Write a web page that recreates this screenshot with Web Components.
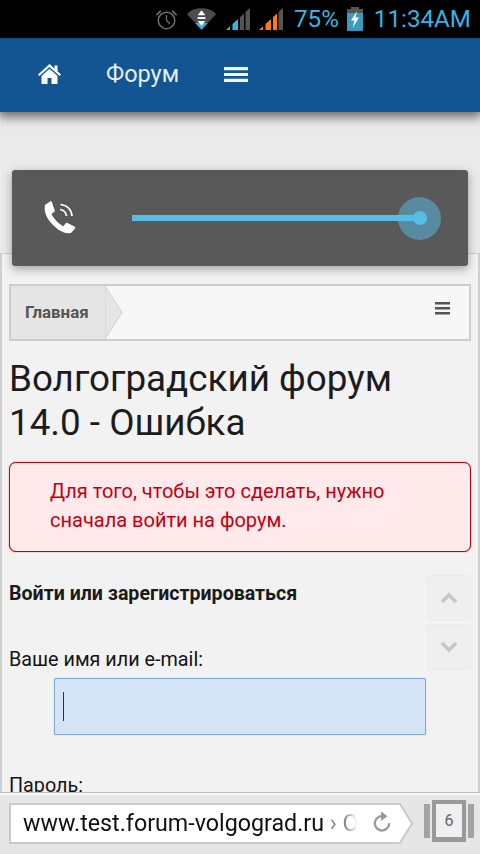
<!DOCTYPE html>
<html>
<head>
<meta charset="utf-8">
<title>Волгоградский форум</title>
<style>
  html, body { margin: 0; padding: 0; }
  body { width: 480px; height: 854px; overflow: hidden; display: flex; flex-direction: column; position: relative; font-family: Roboto, "Noto Sans", sans-serif; background: #ebebeb; }
</style>
</head>
<body>
<template id="status-bar-template">
  <style>
    :host { display: flex; flex: none; height: 38px; background: #000; align-items: center; justify-content: flex-end; color: #33b5e5; font: 24.2px/38px Roboto, sans-serif; box-sizing: border-box; padding: 0 9px 0 0; }
    svg { display: block; flex: none; }
    .pct { margin-left: 11px; }
    .time { margin-left: 11px; }
  </style>
  <svg width="25" height="24" viewBox="0 0 26 24">
    <circle cx="13" cy="13.500" r="8.600" fill="none" stroke="#6e6e6e" stroke-width="1.600"/>
    <path d="M13 8v5.500l3.500 3.500" fill="none" stroke="#6e6e6e" stroke-width="1.400"/>
    <path d="M2.500 8 7 3.500M23.500 8 19 3.500" stroke="#6e6e6e" stroke-width="1.800"/>
  </svg>
  <svg width="31" height="24" viewBox="0 0 32 24" style="margin-left:7px">
    <path d="M1 7C5 2.500 10 1 16 1s11 1.500 15 6L16 23Z" fill="#4c4c4c"/>
    <path d="M9.500 16h13L16 23Z" fill="#33b5e5"/>
    <path d="M16 3l4 5h-8ZM16 19l-4-5h8Z" fill="#fff"/>
    <rect x="12" y="10" width="8" height="2" fill="#fff"/>
  </svg>
  <svg width="24" height="22" viewBox="0 0 24 22" style="margin-left:9px">
    <path d="M0 22 4 18.300V22ZM6.500 22V16L12 11V22Z" fill="#33b5e5"/>
    <path d="M14 22V9.200L18 5.500V22ZM19.500 22V4L24 0V22Z" fill="#555"/>
  </svg>
  <svg width="24" height="22" viewBox="0 0 24 22" style="margin-left:9px">
    <path d="M0 22 4 18.300V22ZM6.500 22V16L12 11V22ZM14 22V9.200L18 5.500V22Z" fill="#ff7a12"/>
    <path d="M19.500 22V4L24 0V22Z" fill="#555"/>
  </svg>
  <span class="pct">75%</span>
  <svg width="16" height="24" viewBox="0 0 16 24" style="margin-left:8px">
    <path d="M4 0h8v2h4v22H0V2h4Z" fill="#555"/>
    <path d="M0 6h16v18H0Z" fill="#3a9bc0"/>
    <path d="M10 4 4 13.500h3.500L5.500 21 12 10.500H8.500Z" fill="#fff"/>
  </svg>
  <span class="time">11:34AM</span>
</template>

<template id="forum-nav-template">
  <style>
    :host { display: flex; flex: none; height: 74px; background: #125592; border-top: 1px solid #0f4d85; box-sizing: border-box; align-items: center; color: #e6edf4; box-shadow: 0 3px 10px 2px rgba(0,0,0,.55); position: relative; z-index: 1; font: 23.500px Roboto, "Open Sans", sans-serif; padding-bottom: 3px; }
    svg { display: block; flex: none; }
    .home { margin-left: 38px; }
    .title { margin-left: 45px; }
    .menu { margin-left: 45px; }
  </style>
  <svg class="home" width="23" height="20" viewBox="0 0 23 20">
    <path d="M11.500 0 0 10.500l1.400 1.500L11.500 3l10.100 9 1.400-1.500-3.500-3.200V1.500h-3v3Z" fill="#fff"/>
    <path d="M11.500 4.800 3.500 12v8h6v-6h4v6h6v-8Z" fill="#fff"/>
  </svg>
  <span class="title"><slot></slot></span>
  <svg class="menu" width="24" height="15" viewBox="0 0 24 15">
    <path d="M0 0h24v3.200H0ZM0 5.900h24v3.200H0ZM0 11.800h24v3.200H0Z" fill="#f2f5f8"/>
  </svg>
</template>

<template id="forum-content-template">
  <style>
    :host { display: block; flex: 1; min-height: 0; overflow: hidden; padding-top: 141px; box-sizing: border-box; background: repeating-linear-gradient(90deg,#ebebeb 0 3px,#e8e8e8 3px 4px); }
    .panel { background: #f2f2f2; border: 1px solid #cfcfcf; border-width: 1px 2px 0; padding: 30px 7px 0; height: 600px; box-sizing: border-box; color: #141414; }
  </style>
  <div class="panel"><slot></slot></div>
</template>

<template id="bread-crumb-template">
  <style>
    :host { display: flex; height: 57px; box-sizing: border-box; background: #f7f7f7; border: 2px solid #cdcdcd; align-items: stretch; justify-content: space-between; color: #555; }
    .crumb { position: relative; width: 94px; background: #e5e5e5; box-sizing: border-box; padding-left: 14px; font: bold 16.900px/53px Roboto, sans-serif; white-space: nowrap; }
    svg.tip { position: absolute; left: 94px; top: 0; }
    svg.menu { margin: 16px 19px 0 0; }
  </style>
  <div class="crumb"><slot></slot>
    <svg class="tip" width="18" height="53" viewBox="0 0 18 53"><path d="M0 0 17 26.500 0 53Z" fill="#e5e5e5" stroke="#cfcfcf" stroke-width="1"/></svg>
  </div>
  <svg class="menu" width="15" height="13" viewBox="0 0 15 13"><path d="M0 0h15v2.600H0ZM0 5h15v2.600H0ZM0 10h15v2.600H0Z" fill="#555"/></svg>
</template>

<template id="page-title-template">
  <style>
    :host { display: block; margin: 16px 30px 17px 0; font: 36.800px/44px Roboto, sans-serif; color: #1c1c1c; }
  </style>
  <slot></slot>
</template>

<template id="error-box-template">
  <style>
    :host { display: block; height: 90px; box-sizing: border-box; border: 1px solid #c4000e; border-radius: 7px; box-shadow: 0 0 1px #c4000e; background: #ffe9ea; color: #c00010; padding: 14px 20px 0 40px; font: 20px/29px Roboto, sans-serif; }
  </style>
  <slot></slot>
</template>

<template id="login-form-template">
  <style>
    :host { display: block; color: #141414; }
    h2 { margin: 31px 0 0; padding-bottom: 4px; border-bottom: 1px solid #f7f7f7; font: bold 19.600px/22px Roboto, sans-serif; color: #1a1a1a; }
    label { display: block; font: 19.800px/22px Roboto, sans-serif; }
    .name { margin-top: 39px; }
    .field { margin: 7px 0 0 45px; width: 372px; height: 57px; box-sizing: border-box; background: #d4e4f5; border: 1px solid #7fa9d8; border-radius: 2px; box-shadow: 0 0 1px #7fa9d8; display: flex; align-items: center; padding-left: 8px; }
    .caret { width: 1px; height: 29px; background: #333; }
    .pass { margin-top: 40px; }
  </style>
  <h2><slot name="title"></slot></h2>
  <label class="name"><slot name="name"></slot></label>
  <div class="field"><span class="caret"></span></div>
  <label class="pass"><slot name="pass"></slot></label>
</template>

<template id="volume-panel-template">
  <style>
    :host { display: flex; position: absolute; left: 12px; top: 170px; width: 456px; height: 96px; box-sizing: border-box; background: rgba(78,78,78,.93); border-radius: 3px; box-shadow: 0 3px 10px rgba(0,0,0,.35); align-items: center; z-index: 3; }
    svg { display: block; flex: none; margin-left: 32px; margin-top: -2px; }
    .track { position: relative; margin-left: 54px; width: 288px; height: 6px; background: #58bde6; }
    .halo { position: absolute; left: 266px; top: -18px; width: 43px; height: 43px; border-radius: 50%; background: rgba(88,189,230,.5); }
    .dot { position: absolute; left: 281px; top: -4px; width: 14px; height: 14px; border-radius: 50%; background: #58bde6; }
  </style>
  <svg width="34" height="34" viewBox="0 0 34 34">
    <path d="M6 1.500 1 5c-1.500 7 2 14 8 20 6 6 12 9 18 8l4-4.500c.6-.8.3-1.600-.5-2l-7-3.600c-.7-.3-1.300-.2-1.800.4l-2.400 3C15 24 10 19 7.400 14l2.900-2.300c.6-.5.7-1.200.3-1.800L7.800 2c-.4-.8-1.100-1-1.800-.5Z" fill="#fff"/>
    <path d="M16 9.500c3.500.5 6 3 6.500 6.500M16.500 4.500c6.500.5 11 5 11.500 11.500" fill="none" stroke="#fff" stroke-width="1.700"/>
  </svg>
  <div class="track"><span class="halo"></span><span class="dot"></span></div>
</template>

<template id="scroll-buttons-template">
  <style>
    :host { display: flex; flex-direction: column; gap: 3px; position: absolute; left: 427px; top: 575px; z-index: 2; }
    div { width: 44px; height: 46px; background: rgba(238,238,238,.9); border: 1px solid #ebebeb; border-radius: 3px; box-sizing: border-box; display: flex; align-items: center; justify-content: center; }
  </style>
  <div><svg width="18" height="12" viewBox="0 0 18 12"><path d="M2 10 9 3l7 7" fill="none" stroke="#c6c6c6" stroke-width="3.600"/></svg></div>
  <div><svg width="18" height="12" viewBox="0 0 18 12"><path d="M2 2l7 7 7-7" fill="none" stroke="#c6c6c6" stroke-width="3.600"/></svg></div>
</template>

<template id="url-bar-template">
  <style>
    :host { display: flex; flex: none; height: 61px; box-sizing: border-box; background: #e6e6e6; border-top: 2px solid #f7f7f7; box-shadow: 0 -1px 0 #bdbdbd; position: relative; z-index: 2; padding: 8px 0 0 9px; align-items: flex-start; }
    .box { position: relative; width: 404px; height: 41px; flex: none; }
    svg.bg { position: absolute; left: 0; top: 0; }
    .url { position: absolute; left: 14px; top: 0; width: 335px; overflow: hidden; white-space: nowrap; font: 23.250px/41px Roboto, sans-serif; color: #111; -webkit-mask-image: linear-gradient(90deg,#000 322px,transparent 334px); mask-image: linear-gradient(90deg,#000 322px,transparent 334px); }
    svg.reload { position: absolute; left: 364px; top: 8px; }
    .tabs-wrap { position: relative; flex: none; width: 50px; height: 42px; margin: -3px 0 0 11px; }
    .count { position: absolute; left: 0; top: 0; width: 100%; text-align: center; font: 16px/42px Roboto, sans-serif; color: #666; }
    .tabs-wrap svg { position: absolute; left: 0; top: 0; }
  </style>
  <div class="box">
    <svg class="bg" width="404" height="41" viewBox="0 0 404 41">
      <path d="M1 1H391L403 20.500 391 40H1Z" fill="#fff" stroke="#cacaca" stroke-width="2"/>
    </svg>
    <div class="url"><slot></slot></div>
    <svg class="reload" width="18" height="22" viewBox="0 0 20 24">
      <path d="M10 5.500A8 8 0 1 0 18 13.500" fill="none" stroke="#999" stroke-width="2.600"/>
      <path d="M9 0l7 5.500-7 5.500Z" fill="#999"/>
    </svg>
  </div>
  <div class="tabs-wrap">
    <svg width="50" height="42" viewBox="0 0 50 42">
      <path d="M0 4h6v34H0ZM44 4h6v34h-6Z" fill="#a3a3a3"/>
      <path d="M8 0h34v42H8Z" fill="#999"/>
      <path d="M12 4h26v33H12Z" fill="#efefef"/>
    </svg>
    <span class="count"><slot name="count"></slot></span>
  </div>
</template>

<status-bar></status-bar>
<forum-nav>Форум</forum-nav>
<forum-content>
  <bread-crumb>Главная</bread-crumb>
  <page-title>Волгоградский форум 14.0 - Ошибка</page-title>
  <error-box>Для того, чтобы это сделать, нужно сначала войти на форум.</error-box>
  <login-form>
    <span slot="title">Войти или зарегистрироваться</span>
    <span slot="name">Ваше имя или e-mail:</span>
    <span slot="pass">Пароль:</span>
  </login-form>
</forum-content>
<url-bar>www.test.forum-volgograd.ru <span style="color:#888">› Ошибка</span><span slot="count">6</span></url-bar>
<volume-panel></volume-panel>
<scroll-buttons></scroll-buttons>

<script>
  // every element here is just a template stamped into an open shadow root
  const names = ['status-bar', 'forum-nav', 'forum-content', 'bread-crumb', 'page-title', 'error-box', 'login-form', 'volume-panel', 'scroll-buttons', 'url-bar'];
  for (const name of names) {
    customElements.define(name, class extends HTMLElement {
      constructor() {
        super();
        const shadowRoot = this.attachShadow({mode: 'open'});
        const t = document.querySelector('#' + name + '-template');
        shadowRoot.appendChild(t.content.cloneNode(true));
      }
    });
  }
</script>
</body>
</html>
